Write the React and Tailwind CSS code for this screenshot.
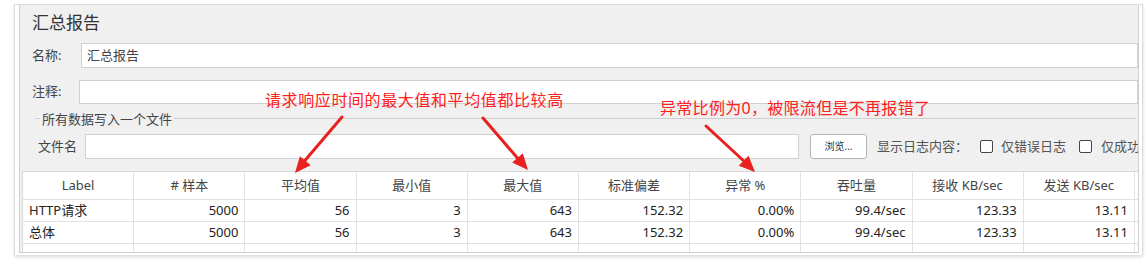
import React from 'react';

const columns = ['Label', '# 样本', '平均值', '最小值', '最大值', '标准偏差', '异常 %', '吞吐量', '接收 KB/sec', '发送 KB/sec'];

const rows = [
  ['HTTP请求', '5000', '56', '3', '643', '152.32', '0.00%', '99.4/sec', '123.33', '13.11'],
  ['总体', '5000', '56', '3', '643', '152.32', '0.00%', '99.4/sec', '123.33', '13.11'],
];

function Checkbox() {
  return <span className="inline-block shrink-0 w-[13px] h-[13px] border border-[#444] rounded-[2px] bg-white" />;
}

export default function App() {
  return (
    <div className="relative w-[1145px] h-[260px] bg-white overflow-hidden font-['Noto_Sans','Noto_Sans_CJK_SC',sans-serif] text-[#333]">
      <div className="ml-[14px] mt-[4px] w-[1129px] h-[251px] border-l border-t border-r border-[#dcdcdc] pl-[4px] pr-[3px] shadow-[0_2px_3px_rgba(0,0,0,0.15)]">
        <div className="h-[248px] bg-[#f0f0f0] border-l border-r border-b border-[#cfcfcf] overflow-hidden flex flex-col">
          <div className="shrink-0 h-[34px] flex items-center pl-[12px] text-[17px] text-[#333] leading-none">汇总报告</div>

          <div className="shrink-0 mt-[4px] h-[25px] flex items-center">
            <span className="shrink-0 w-[61px] pl-[12px] text-[13px] text-[#444] whitespace-nowrap">名称:</span>
            <div className="flex-1 h-full bg-white border border-[#d0d0d0] flex items-center pl-[5px] text-[13px] text-[#444]">汇总报告</div>
          </div>

          <div className="shrink-0 mt-[12px] h-[24px] flex items-center">
            <span className="shrink-0 w-[59px] pl-[12px] text-[13px] text-[#444] whitespace-nowrap">注释:</span>
            <div className="flex-1 h-full bg-white border border-[#d0d0d0]" />
          </div>

          <div className="shrink-0 mt-[7px] h-[18px] flex items-start pl-[15px] pr-[2px]">
            <div className="w-[5px] mt-[7px] border-t border-[#cfcfcf]" />
            <span className="px-[2px] text-[13px] leading-[16px] text-[#444] whitespace-nowrap">所有数据写入一个文件</span>
            <div className="flex-1 mt-[7px] border-t border-[#cfcfcf]" />
          </div>

          <div className="shrink-0 mt-[5px] h-[25px] flex items-center whitespace-nowrap overflow-hidden">
            <span className="shrink-0 w-[65px] pl-[18px] text-[13px] text-[#444]">文件名</span>
            <div className="shrink-0 w-[714px] h-full bg-white border border-[#d0d0d0]" />
            <button className="shrink-0 ml-[11px] w-[57px] h-[25px] bg-white border border-[#b5b5b5] rounded-[3px] text-[10px] text-[#333]">浏览...</button>
            <span className="shrink-0 ml-[10px] text-[13px] text-[#555]">显示日志内容：</span>
            <span className="shrink-0 ml-[12px] flex items-center"><Checkbox /></span>
            <span className="shrink-0 ml-[8px] text-[13px] text-[#555]">仅错误日志</span>
            <span className="shrink-0 ml-[13px] flex items-center"><Checkbox /></span>
            <span className="shrink-0 ml-[9px] text-[13px] text-[#555]">仅成功</span>
          </div>

          <div className="shrink-0 mt-[12px] ml-[2px] w-[1116px] h-[90px] overflow-hidden bg-white border-l border-t border-[#d8d8d8]">
            <div className="grid grid-cols-[repeat(10,111.2px)_1fr] h-[28px] border-b border-[#e2e2e2]">
              {columns.map((c) => (
                <div key={c} className="flex items-center justify-center border-r border-[#e2e2e2] text-[13px] text-[#444] whitespace-nowrap">{c}</div>
              ))}
              <div />
            </div>
            {rows.map((r, i) => (
              <div key={i} className="grid grid-cols-[repeat(10,111.2px)_1fr] h-[22px] border-b border-[#e2e2e2]">
                {r.map((v, j) => (
                  <div
                    key={j}
                    className={
                      j === 0
                        ? 'flex items-center pl-[6px] border-r border-[#e2e2e2] text-[13px] text-[#222]'
                        : 'flex items-center justify-end pr-[6px] border-r border-[#e2e2e2] text-[13px] text-[#222]'
                    }
                  >
                    {v}
                  </div>
                ))}
                <div />
              </div>
            ))}
            <div className="grid grid-cols-[repeat(10,111.2px)_1fr] h-[22px]">
              {columns.map((c) => (
                <div key={c} className="border-r border-[#e2e2e2]" />
              ))}
              <div />
            </div>
          </div>
        </div>
      </div>

      <div className="absolute left-[265px] top-[90px] text-[16px] leading-[20px] tracking-[0.6px] text-[#ff2020] whitespace-nowrap">请求响应时间的最大值和平均值都比较高</div>
      <div className="absolute left-[660px] top-[98px] text-[16px] leading-[20px] tracking-[0.3px] text-[#ff2020] whitespace-nowrap">异常比例为0，被限流但是不再报错了</div>

      <svg className="absolute left-0 top-0" width="1145" height="260" viewBox="0 0 1145 260">
        <g stroke="#e8201f" strokeWidth="3" strokeLinecap="round" fill="#e8201f">
          <line x1="342" y1="117" x2="302" y2="164" />
          <polygon points="295,173 310.7,165.2 299.9,156.2" stroke="none" />
          <line x1="483" y1="118" x2="520" y2="161" />
          <polygon points="528,170 522.8,153.3 512.2,162.5" stroke="none" />
          <line x1="706" y1="126" x2="746" y2="163" />
          <polygon points="755,172 748.5,155.8 738.7,165.8" stroke="none" />
        </g>
      </svg>
    </div>
  );
}
